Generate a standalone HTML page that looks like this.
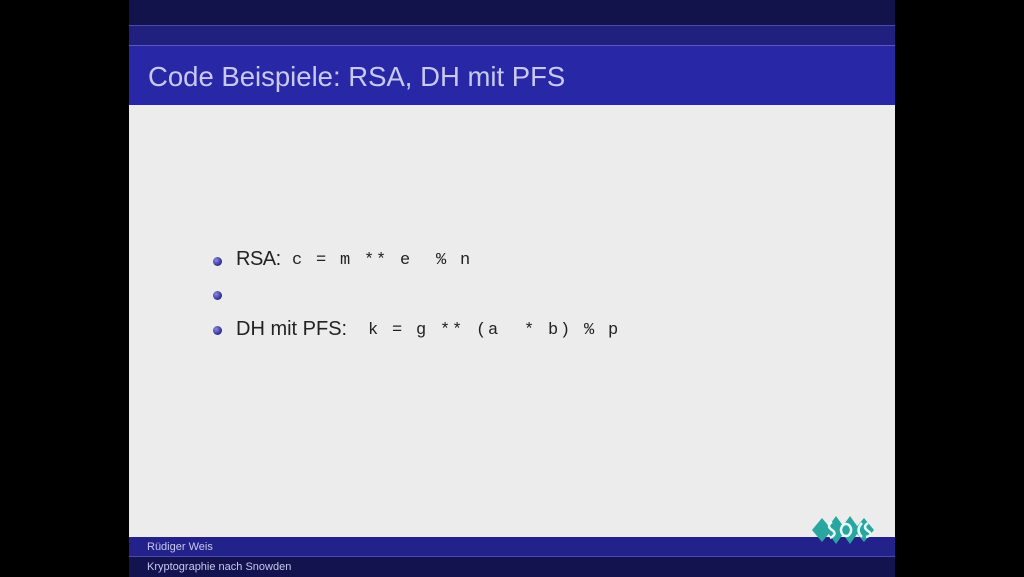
<!DOCTYPE html>
<html><head><meta charset="utf-8"><style>
body{margin:0;width:1024px;height:576px;background:#000;position:relative;overflow:hidden;font-family:"Liberation Sans",sans-serif}
.s{position:absolute;left:129px;width:766px}
.t{position:absolute;white-space:pre;color:#222}
.m{font-family:"Liberation Mono",monospace;letter-spacing:1.8px}
.b{position:absolute;width:9px;height:9px;border-radius:50%;background:radial-gradient(circle at 35% 35%,#8a8ae0,#2a2a90 70%)}
</style></head><body>
<div class="s" style="top:0;height:25px;background:#13134c"></div>
<div class="s" style="top:25px;height:20px;background:#20207e;border-top:1px solid #4a4ab0"></div>
<div class="s" style="top:45px;height:60px;background:#2828a6;border-top:1px solid #5a5ac0"></div>
<div class="s" style="top:105px;height:432px;background:#ececec"></div>
<div class="s" style="top:537px;height:19px;background:#22228a"></div>
<div class="s" style="top:556px;height:20px;background:#131350;border-top:1px solid #4a4ab0"></div>
<div class="t" style="left:148px;top:61px;font-size:27.5px;color:#c8c8f0">Code Beispiele: RSA, DH mit PFS</div>
<div class="b" style="left:213px;top:257px"></div>
<div class="b" style="left:213px;top:291px"></div>
<div class="b" style="left:213px;top:326px"></div>
<div class="t" style="left:236px;top:248px;font-size:20px;letter-spacing:-0.5px">RSA:</div>
<div class="t m" style="left:292px;top:251px;font-size:17px">c = m ** e  % n</div>
<div class="t" style="left:236px;top:318px;font-size:20px">DH mit PFS:</div>
<div class="t m" style="left:368px;top:321px;font-size:17px">k = g ** (a  * b) % p</div>
<div class="t" style="left:147px;top:541px;font-size:11px;color:#c8c8f0">Rüdiger Weis</div>
<div class="t" style="left:147px;top:561px;font-size:11px;color:#c8c8f0">Kryptographie nach Snowden</div>
<svg style="position:absolute;left:812px;top:514px" width="64" height="32" viewBox="0 0 64 32">
<g fill="#2aa6a0"><path d="M0 16L10 4 20 16 10 28Z"/><path d="M14 16L24 2 34 16 24 30Z"/><path d="M28 16L38 2 48 16 38 30Z"/><path d="M42 16L52 4 62 16 52 28Z"/></g>
<g fill="none" stroke="#e8ffff" stroke-width="2.5"><path d="M20 8q-6 4 0 8t-2 8"/><path d="M34 10a5 6 0 1 0 0.1 0"/><path d="M50 9q-7 7 0 14"/><path d="M56 9q-6 4 0 8t-2 6"/></g>
</svg>
</body></html>
